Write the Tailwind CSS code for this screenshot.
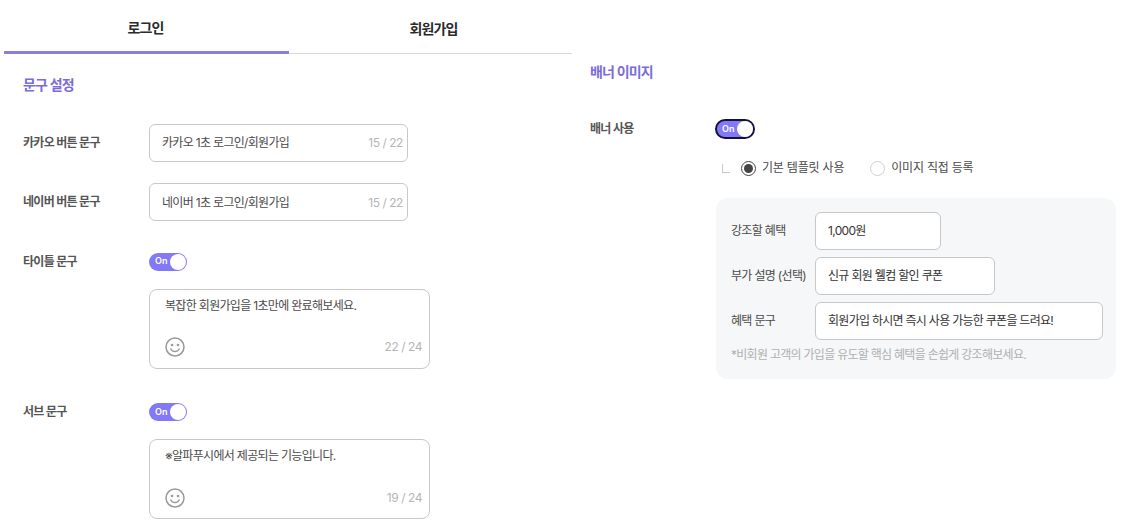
<!DOCTYPE html>
<html lang="ko">
<head>
    <meta charset="UTF-8">
    <title>로그인 문구 설정</title>
    <script src="https://cdn.jsdelivr.net/npm/@tailwindcss/browser@4"></script>
</head>
<body class="bg-white h-[532px] overflow-hidden flex font-['Inter','Noto_Sans_CJK_KR',sans-serif] text-[12px] tracking-[-0.68px] text-[#4a4a4a]">
    <!-- left column -->
    <div class="w-[572px] pl-[4px] shrink-0">
        <div class="flex h-[54px] border-b border-[#d9d9d9] text-[14px] font-bold tracking-[-0.9px] text-[#2b2b2b]">
            <div class="w-[285px] h-[54px] flex items-center justify-center pt-[3px] pr-[2px] border-b-[3px] border-[#8b7fdc]">로그인</div>
            <div class="w-[283px] flex items-center justify-center pl-[6px] pt-[3px]">회원가입</div>
        </div>
        <div class="pl-[19px]">
            <h2 class="h-[20px] mt-[21px] text-[14px] leading-[20px] font-bold tracking-[-0.8px] text-[#7a6cdc]">문구 설정</h2>

            <div class="flex items-center mt-[29px] h-[38px]">
                <div class="w-[126px] font-bold text-[#555]">카카오 버튼 문구</div>
                <div class="w-[259px] h-[38px] border border-[#c8c8c8] rounded-md flex items-center justify-between pl-[12px] pr-[4px]">
                    <span>카카오 1초 로그인/회원가입</span><span class="text-[#b5b5b5] tracking-[-0.45px]">15 / 22</span>
                </div>
            </div>
            <div class="flex items-center mt-[21px] h-[38px]">
                <div class="w-[126px] font-bold text-[#555]">네이버 버튼 문구</div>
                <div class="w-[259px] h-[38px] border border-[#c8c8c8] rounded-md flex items-center justify-between pl-[12px] pr-[4px] pt-[1px]">
                    <span>네이버 1초 로그인/회원가입</span><span class="text-[#b5b5b5] tracking-[-0.45px]">15 / 22</span>
                </div>
            </div>

            <div class="flex items-center mt-[32px] h-[18px]">
                <div class="w-[126px] font-bold text-[#555]">타이틀 문구</div>
                <div class="w-[38px] h-[18px] rounded-full bg-[#8378f5] flex items-center justify-between pl-[6px] pr-[1px] text-[9px] font-semibold tracking-normal text-white">
                    <span class="-mt-[2px]">On</span><span class="w-[16px] h-[16px] rounded-full bg-white"></span>
                </div>
            </div>
            <div class="ml-[126px] mt-[18px] w-[281px] h-[80px] border border-[#c8c8c8] rounded-lg pl-[15px] pr-[7px] pt-[7px] flex flex-col justify-between pb-[11px]">
                <div class="leading-[18px]">복잡한 회원가입을 1초만에 완료해보세요.</div>
                <div class="flex items-center justify-between">
                    <svg class="w-[20px] h-[20px]" viewBox="0 0 20 20" fill="none" stroke="#999" stroke-width="1.5"><circle cx="10" cy="10" r="9"/><circle cx="7" cy="8" r="0.6" fill="#999"/><circle cx="13" cy="8" r="0.6" fill="#999"/><path d="M5.8 12c1 1.8 2.5 2.6 4.2 2.6s3.200-.8 4.200-2.600" stroke-linecap="round"/></svg>
                    <span class="text-[#b5b5b5] tracking-[-0.45px]">22 / 24</span>
                </div>
            </div>

            <div class="flex items-center mt-[34px] h-[18px]">
                <div class="w-[126px] font-bold text-[#555]">서브 문구</div>
                <div class="w-[38px] h-[18px] rounded-full bg-[#8378f5] flex items-center justify-between pl-[6px] pr-[1px] text-[9px] font-semibold tracking-normal text-white">
                    <span class="-mt-[1px]">On</span><span class="w-[16px] h-[16px] rounded-full bg-white"></span>
                </div>
            </div>
            <div class="ml-[126px] mt-[18px] w-[281px] h-[80px] border border-[#c8c8c8] rounded-lg pl-[15px] pr-[7px] pt-[7px] flex flex-col justify-between pb-[10px]">
                <div class="leading-[18px]">※알파푸시에서 제공되는 기능입니다.</div>
                <div class="flex items-center justify-between">
                    <svg class="w-[20px] h-[20px]" viewBox="0 0 20 20" fill="none" stroke="#999" stroke-width="1.5"><circle cx="10" cy="10" r="9"/><circle cx="7" cy="8" r="0.6" fill="#999"/><circle cx="13" cy="8" r="0.6" fill="#999"/><path d="M5.8 12c1 1.8 2.5 2.6 4.2 2.6s3.200-.8 4.200-2.600" stroke-linecap="round"/></svg>
                    <span class="text-[#b5b5b5] tracking-[-0.45px]">19 / 24</span>
                </div>
            </div>
        </div>
    </div>

    <!-- right column -->
    <div class="pl-[18px] flex-1">
        <h2 class="h-[20px] mt-[62px] text-[14px] leading-[20px] font-bold tracking-[-0.8px] text-[#7a6cdc]">배너 이미지</h2>
        <div class="flex items-center mt-[37px] h-[20px]">
            <div class="w-[125px] font-bold text-[#555]">배너 사용</div>
            <div class="w-[40px] h-[20px] rounded-full bg-[#8378f5] border-2 border-[#14123a] flex items-center justify-between pl-[5px] pr-[0px] text-[9px] font-semibold tracking-normal text-white">
                <span class="-mt-[1px]">On</span><span class="w-[16px] h-[16px] rounded-full bg-white"></span>
            </div>
        </div>
        <div class="flex items-center mt-[19px] ml-[132px] h-[20px] text-[#4a4a4a]">
            <span class="w-[8px] h-[9px] border-l border-b border-[#c8c8c8] mr-[11px]"></span>
            <span class="w-[15px] h-[15px] rounded-full border-[1.5px] border-[#444] flex items-center justify-center mr-[6px]"><span class="w-[9px] h-[9px] rounded-full bg-[#444]"></span></span>
            <span class="mr-[26px] tracking-[-0.2px]">기본 템플릿 사용</span>
            <span class="w-[15px] h-[15px] rounded-full border border-[#d0d0d0] mr-[6px]"></span>
            <span class="tracking-[-0.2px]">이미지 직접 등록</span>
        </div>
        <div class="mt-[20px] ml-[126px] w-[400px] h-[181px] rounded-xl bg-[#f5f7f8] pl-[15px] pt-[14px]">
            <div class="flex items-center h-[38px]">
                <div class="w-[84px] shrink-0">강조할 혜택</div>
                <div class="w-[126px] h-[38px] bg-white border border-[#c8c8c8] rounded-md flex items-center pl-[12px] text-[#333]">1,000원</div>
            </div>
            <div class="flex items-center h-[38px] mt-[7px]">
                <div class="w-[84px] shrink-0 whitespace-nowrap">부가 설명 (선택)</div>
                <div class="w-[180px] h-[38px] bg-white border border-[#c8c8c8] rounded-md flex items-center pl-[12px] text-[#333]">신규 회원 웰컴 할인 쿠폰</div>
            </div>
            <div class="flex items-center h-[38px] mt-[7px]">
                <div class="w-[84px] shrink-0">혜택 문구</div>
                <div class="w-[288px] h-[38px] bg-white border border-[#c8c8c8] rounded-md flex items-center pl-[12px] text-[#333] tracking-[-0.72px]">회원가입 하시면 즉시 사용 가능한 쿠폰을 드려요!</div>
            </div>
            <div class="mt-[7px] text-[#b0b0b0] leading-[16px] tracking-[-0.72px]">*비회원 고객의 가입을 유도할 핵심 혜택을 손쉽게 강조해보세요.</div>
        </div>
    </div>
</body>
</html>
